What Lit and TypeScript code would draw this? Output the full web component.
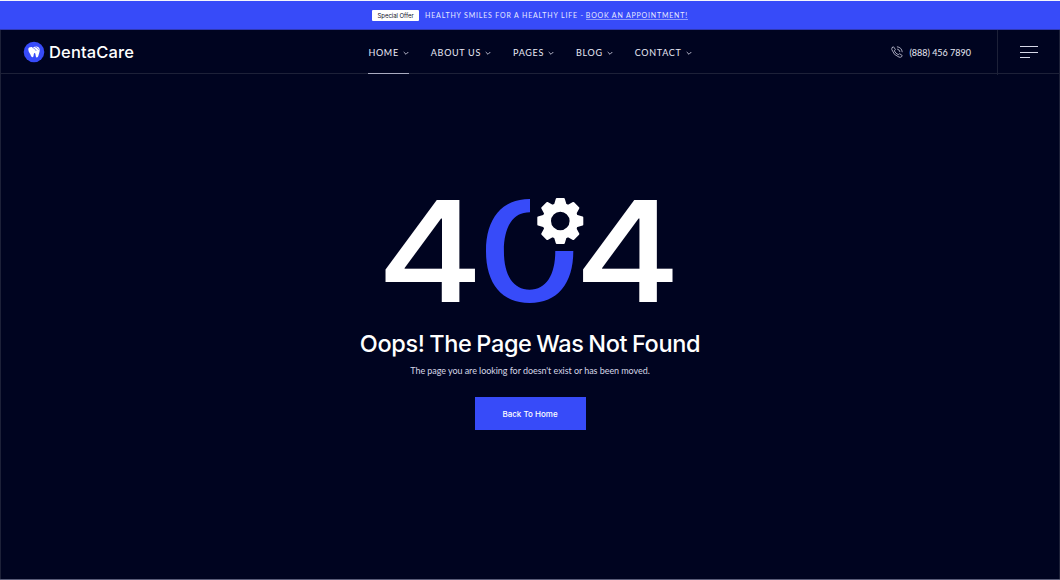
import { LitElement, html, css, svg } from 'lit';
import { customElement } from 'lit/decorators.js';

@customElement('site-header')
class SiteHeader extends LitElement {
  static styles = css`
    :host {
      display: block;
      color: #e9eaf6;
      font-family: Lato, sans-serif;
    }
    .promo {
      display: flex;
      align-items: center;
      justify-content: center;
      height: 29px;
      box-sizing: border-box;
      border-bottom: 1px solid #3039b4;
      background: #374bf9;
      font-size: 7px;
      letter-spacing: 0.82px;
      color: #e6e9ff;
      white-space: nowrap;
    }
    .badge {
      width: 47px;
      height: 11px;
      line-height: 11px;
      margin-right: 6px;
      border-radius: 1px;
      background: #ffffff;
      color: #11142c;
      font-family: Inter, sans-serif;
      font-size: 6px;
      letter-spacing: -0.05px;
      text-align: center;
    }
    .promo a {
      margin-left: 2px;
      color: inherit;
      text-decoration: none;
      border-bottom: 1px solid #8e9afc;
      line-height: 8px;
    }
    .bar {
      display: grid;
      grid-template-columns: 345px 1fr 345px;
      height: 44px;
      box-sizing: border-box;
      border-bottom: 1px solid #1d2138;
    }
    .logo {
      display: flex;
      align-items: center;
      gap: 4px;
      padding: 0 0 1px 23px;
      font-family: Inter, sans-serif;
      font-size: 16.5px;
      font-weight: 500;
      letter-spacing: 0.15px;
      color: #ffffff;
    }
    nav {
      display: flex;
      justify-content: center;
      gap: 22px;
    }
    nav a {
      display: flex;
      align-items: center;
      gap: 4px;
      height: 44px;
      box-sizing: border-box;
      padding-top: 2px;
      border-bottom: 1px solid transparent;
      color: inherit;
      text-decoration: none;
      font-size: 9px;
      letter-spacing: 0.7px;
      white-space: nowrap;
    }
    nav a.active {
      border-color: #a9abc0;
    }
    svg {
      display: block;
    }
    .right {
      display: flex;
      justify-content: flex-end;
    }
    .phone {
      display: flex;
      align-items: center;
      gap: 6px;
      padding: 0 26px 1px 0;
      font-size: 9px;
      white-space: nowrap;
    }
    .menu {
      display: flex;
      align-items: center;
      width: 63px;
      height: 45px;
      box-sizing: border-box;
      padding: 0 0 2px 22px;
      border-left: 1px solid #1d2138;
    }
  `;

  links = ['Home', 'About us', 'Pages', 'Blog', 'Contact'];

  render() {
    return html`
      <div class="promo">
        <span class="badge">Special Offer</span>
        <span>HEALTHY SMILES FOR A HEALTHY LIFE -</span>
        <a href="#">BOOK AN APPOINTMENT!</a>
      </div>
      <div class="bar">
        <div class="logo">
          <svg width="22" height="22" viewBox="0 0 22 22">
            <circle cx="11" cy="11" r="10.3" fill="#374bf9"/>
            <path d="M5.300 8.200C5.300 6.200 7.800 5.300 10.300 6.300 12.800 4.700 16.400 5.400 16.700 8.400c.2 2.400-.9 4.200-1.400 6.600-.4 1.700-2.100 2-2.500.2-.3-1.600-.3-3-1.200-3.200-.8.2-.8 1.700-1.100 3.200-.4 1.500-2.100 1.300-2.500-.1C7.300 12.500 5.300 11 5.300 8.200Z" fill="#fff"/>
            <path d="M9 6.300Q12 7 13.300 10M12 5.800Q14.500 6.500 15.800 8.800" fill="none" stroke="#374bf9" stroke-width=".6"/>
          </svg>
          DentaCare
        </div>
        <nav>
          ${this.links.map((link, i) => html`
            <a href="#" class=${i === 0 ? 'active' : ''}>
              ${link.toUpperCase()}
              <svg width="6" height="6" viewBox="0 0 6 6" fill="none">
                <path d="M.7 2 3 4.300 5.300 2" stroke="#c8cadb" stroke-width=".9"/>
              </svg>
            </a>
          `)}
        </nav>
        <div class="right">
          <div class="phone">
            <svg width="12" height="12" viewBox="0 0 12 12" fill="none" stroke="#b4b6c9" stroke-width=".9" stroke-linecap="round" stroke-linejoin="round">
              <path d="M1.200 1.600 2.500.8 4.400 3.400 3.300 4.900Q4.700 7.500 7.200 8.700L8.600 7.700 11.200 9.500 10.500 10.800Q9.500 11.600 8 11.100 2.600 9.300.8 3.600.6 2.300 1.200 1.600Z"/>
              <path d="M6.300.8Q10.800 1.300 11.200 5.800M6.500 3.100Q8.500 3.500 8.900 5.600"/>
            </svg>
            (888) 456 7890
          </div>
          <div class="menu">
            <svg width="19" height="14" viewBox="0 0 19 14" fill="#d6d8e8" shape-rendering="crispEdges">
              <rect y="1" width="18" height="1"/>
              <rect y="7" width="18" height="1"/>
              <rect y="12" width="10" height="1"/>
            </svg>
          </div>
        </div>
      </div>
    `;
  }
}

@customElement('not-found')
class NotFound extends LitElement {
  static styles = css`
    :host {
      display: flex;
      flex-direction: column;
      align-items: center;
      padding-top: 88px;
      color: #ffffff;
      font-family: Inter, sans-serif;
    }
    .code {
      display: block;
      font-size: 140px;
      font-weight: 500;
    }
    h1 {
      margin: -11px 0 0;
      font-size: 23.5px;
      line-height: 30px;
      font-weight: 500;
      letter-spacing: -0.35px;
      word-spacing: -1.2px;
      white-space: nowrap;
    }
    p {
      margin: 5px 0 0;
      font-family: Lato, sans-serif;
      font-size: 9px;
      line-height: 14px;
      letter-spacing: -0.06px;
      color: #d5d7e6;
      white-space: nowrap;
    }
    .button {
      width: 111px;
      height: 33px;
      line-height: 34px;
      margin-top: 19px;
      background: #374bf9;
      color: #ffffff;
      font-size: 8px;
      font-weight: 500;
      text-align: center;
      text-decoration: none;
    }
  `;

  gear() {
    const teeth = [0, 45, 90, 135, 180, 225, 270, 315];
    return svg`
      <g transform="translate(190.3 59)" fill="#fff">
        <circle r="13.600" fill="none" stroke="#fff" stroke-width="8.600"/>
        ${teeth.map((angle) => svg`
          <path transform="rotate(${angle})" d="M-6.500-15.500-4.500-22.300Q-4.300-23-3.500-23H3.500Q4.300-23 4.500-22.300L6.500-15.500Z"/>
        `)}
      </g>
    `;
  }

  render() {
    return html`
      <svg class="code" width="320" height="178" viewBox="0 0 320 178">
        <defs>
          <clipPath id="gap">
            <path d="M0 0H160V89H320V178H0Z"/>
          </clipPath>
        </defs>
        <text transform="translate(6.500 140) scale(1.167 1)" fill="#fff">4</text>
        <g clip-path="url(#gap)">
          <text transform="translate(159.700 140) scale(1.165 1)" fill="#374bf9" text-anchor="middle">0</text>
        </g>
        <text transform="translate(204 140) scale(1.167 1)" fill="#fff">4</text>
        ${this.gear()}
      </svg>
      <h1>Oops! The Page Was Not Found</h1>
      <p>The page you are looking for doesn't exist or has been moved.</p>
      <a class="button" href="#">Back To Home</a>
    `;
  }
}

@customElement('app-root')
class AppRoot extends LitElement {
  static styles = css`
    :host {
      display: block;
      height: 580px;
      box-sizing: border-box;
      border-top: 1px solid #f4f5fb;
      border-bottom: 1px solid #5a5d78;
      background: #000420;
      box-shadow: inset 1px 0 #1d2138, inset -1px 0 #1d2138;
      overflow: hidden;
    }
  `;

  render() {
    return html`
      <site-header></site-header>
      <not-found></not-found>
    `;
  }
}
